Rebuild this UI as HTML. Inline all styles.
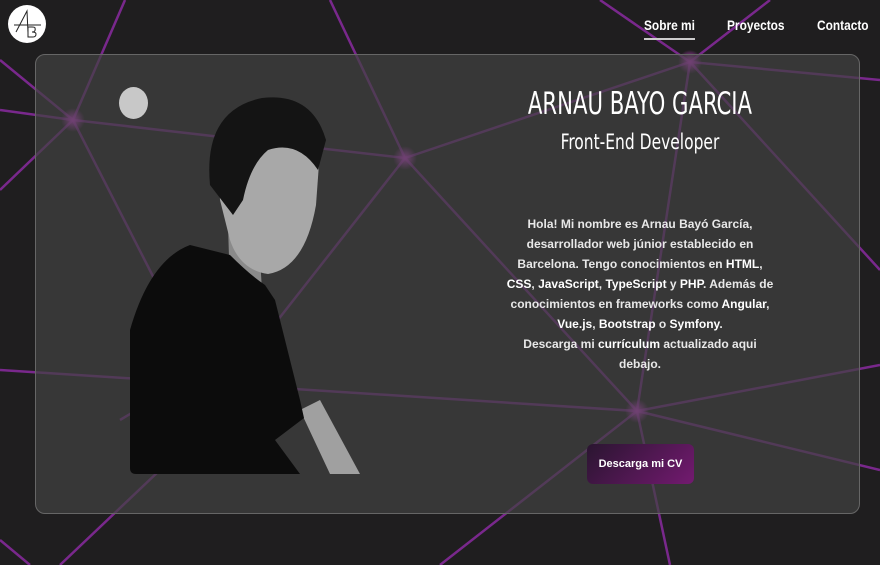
<!DOCTYPE html>
<html><head><meta charset="utf-8"><style>
html,body{margin:0;padding:0;width:880px;height:565px;overflow:hidden;background:#1f1e1f;font-family:"Liberation Sans",sans-serif;}
.bg{position:absolute;left:0;top:0}
.logo{position:absolute;left:8px;top:5px;width:38px;height:38px;border-radius:50%;background:#fff;}
.nav{position:absolute;top:17px;color:#fff;font-size:14px;font-weight:bold;font-family:"Liberation Sans",sans-serif;white-space:nowrap;transform:scaleX(0.85);transform-origin:left top;display:inline-block}
.act{border-bottom:2px solid #ccc;padding-bottom:5px}
.card{position:absolute;left:35px;top:54px;width:823px;height:458px;border:1px solid #666;border-radius:10px;background:rgba(66,66,66,0.7);}
.dot{position:absolute;left:119px;top:87px;width:29px;height:32px;border-radius:50%;background:#c8c8c8}
h1{position:absolute;left:440px;width:400px;top:86px;margin:0;text-align:center;color:#fff;font-family:"DejaVu Sans Condensed",sans-serif;font-weight:normal;font-size:31px;transform:scaleX(0.76)}
h2{position:absolute;left:440px;width:400px;top:130px;margin:0;text-align:center;color:#fff;font-family:"DejaVu Sans Condensed",sans-serif;font-weight:normal;font-size:21px;transform:scaleX(0.82)}
p{position:absolute;left:505px;width:270px;top:214px;margin:0;text-align:center;color:#e8e8e8;font-size:12px;line-height:20px;font-weight:bold}
p b{color:#fff;font-weight:bold}
.btn{position:absolute;left:587px;top:444px;width:107px;height:40px;border-radius:6px;background:linear-gradient(135deg,#2a1530,#731a70);color:#fff;font-size:11px;font-weight:bold;text-align:center;line-height:40px}
</style></head><body>
<svg class="bg" width="880" height="565">
<defs><radialGradient id="g"><stop offset="0" stop-color="#e040e8"/><stop offset="1" stop-color="#e040e8" stop-opacity="0"/></radialGradient></defs>
<g stroke="#8a2aa0" stroke-width="2.5" opacity="0.85" fill="none">
<path d="M73 120L405 158L690 62L880 80M73 120L0 190M0 110L73 120M0 60L73 120L125 0M73 120L160 290M405 158L330 0M405 158L270 330M405 158L637 411M690 62L600 0M690 62L770 0M690 62L880 270M690 62L637 411M637 411L880 365M637 411L0 370M637 411L880 470M637 411L670 565M637 411L440 565M0 540L30 565M60 565L160 470M270 330L120 420"/>
</g>
<circle cx="73" cy="120" r="12" fill="url(#g)"/><circle cx="405" cy="158" r="12" fill="url(#g)"/><circle cx="690" cy="62" r="12" fill="url(#g)"/><circle cx="637" cy="411" r="12" fill="url(#g)"/>
</svg>
<div class="logo"><svg width="38" height="38"><path d="M8 27L19 6L20 28M6 20H33M20 22V32H25Q28 32 28 29Q28 27 24 27Q28 27 27 23Q27 22 24 22Z" stroke="#222" stroke-width="1" fill="none"/></svg></div>
<span class="nav act" style="left:644px">Sobre mi</span><span class="nav" style="left:727px">Proyectos</span><span class="nav" style="left:817px">Contacto</span>
<div class="card"></div>
<div class="dot"></div>
<svg class="bg" width="880" height="565">
<path d="M228 225L258 225L262 290L230 290Z" fill="#8a8a8a"/>
<path d="M218 160Q225 120 265 115Q312 112 320 150L316 205Q305 268 268 274Q240 270 230 240L220 200Z" fill="#a8a8a8"/>
<path d="M210 185Q203 110 262 98Q312 92 326 140L318 170Q298 140 268 150Q250 165 243 200L233 215Z" fill="#141414"/>
<path d="M300 410L320 400L360 474L330 474Z" fill="#a0a0a0"/>
<path d="M130 330Q150 260 190 245L230 255Q250 275 265 285L275 300L300 400L304 418L275 440L300 474L136 474Q130 474 130 468Z" fill="#0c0c0c"/>
</svg>
<h1>ARNAU BAYO GARCIA</h1>
<h2>Front-End Developer</h2>
<p>Hola! Mi nombre es Arnau Bayó García, desarrollador web júnior establecido en Barcelona. Tengo conocimientos en <b>HTML</b>, <b>CSS</b>, <b>JavaScript</b>, <b>TypeScript</b> y <b>PHP</b>. Además de conocimientos en frameworks como <b>Angular</b>, <b>Vue.js</b>, <b>Bootstrap</b> o <b>Symfony</b>.<br>Descarga mi <b>currículum</b> actualizado aqui debajo.</p>
<div class="btn">Descarga mi CV</div>
</body></html>
